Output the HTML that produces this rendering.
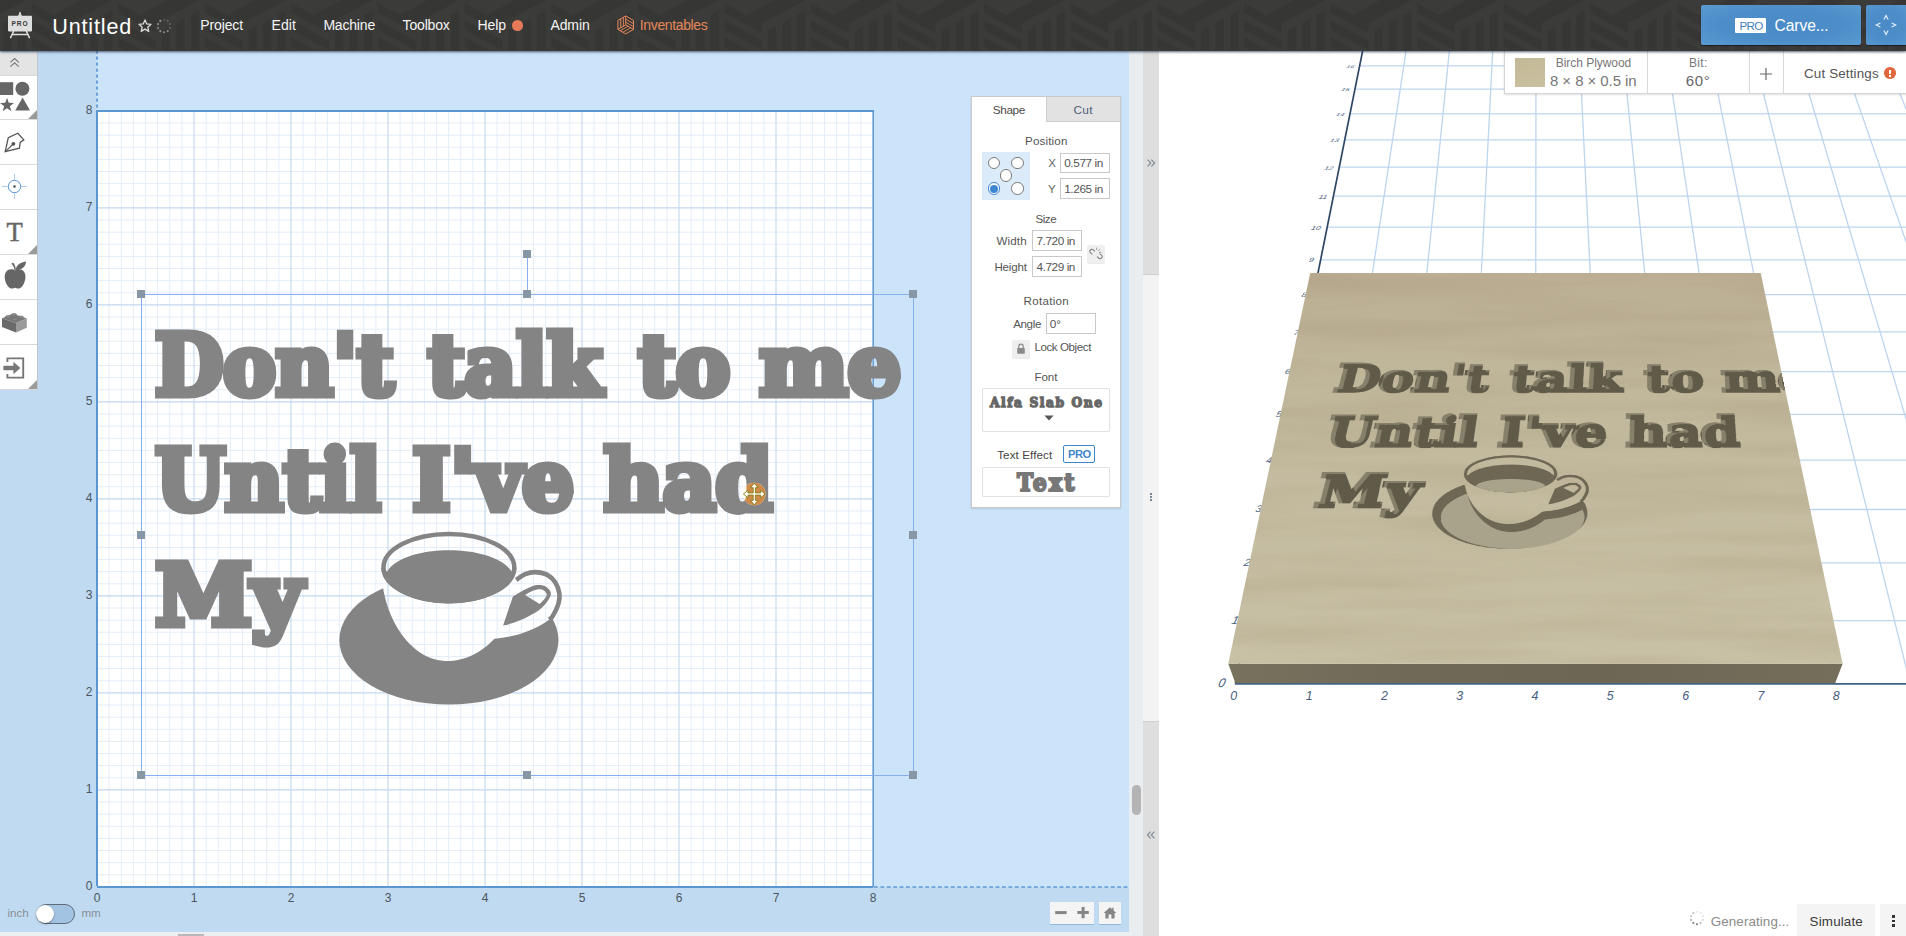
<!DOCTYPE html>
<html lang="en"><head><meta charset="utf-8"><title>Easel - Untitled</title>
<style>
*{box-sizing:border-box}
html,body{margin:0;padding:0}
body{width:1906px;height:936px;overflow:hidden;position:relative;background:#fff;
 font-family:"Liberation Sans",sans-serif;color:#4a4a4a;font-size:13px}
.abs{position:absolute}
svg{display:block;position:absolute;overflow:visible}
/* ---------- header ---------- */
#hdr{position:absolute;left:0;top:0;width:1906px;height:50.6px;background:#3a3b38;overflow:hidden;
 box-shadow:0 1px 2.5px rgba(40,55,80,.8);z-index:20}
#hdr .t{position:absolute;color:#f2f2f2;white-space:nowrap;line-height:1}
#hdr .menu{font-size:14.6px;top:18px;letter-spacing:-.15px}
#title{font-size:22.5px;top:14px;left:52px;color:#fff;letter-spacing:-.2px}
#carve{position:absolute;left:1701px;top:5px;width:160px;height:40px;background:radial-gradient(ellipse at center,#4a8bc7 0%,#4d8ec9 55%,#5b9ad2 100%);border-radius:2px;
 box-shadow:0 1px 1px rgba(0,0,0,.5)}
#carve2{position:absolute;left:1866px;top:5px;width:44px;height:40px;background:radial-gradient(ellipse at 45% 50%,#4a8bc7 0%,#4d8ec9 55%,#5b9ad2 100%);border-radius:2px;
 box-shadow:0 1px 1px rgba(0,0,0,.5)}
/* ---------- canvas ---------- */
#cv{position:absolute;left:0;top:50px;width:1129px;height:882px;background:#cce4fa;overflow:hidden}
#cvbot{position:absolute;left:0;top:930px;width:1143px;height:6px;background:#eceff1}
#vscroll{position:absolute;left:1129px;top:50px;width:14px;height:886px;background:#e9edf0}
#divider{position:absolute;left:1143px;top:50px;width:16px;height:886px;background:#dedede}
#p3d{position:absolute;left:1159px;top:50px;width:747px;height:886px;background:#fff;overflow:hidden}
.rl{position:absolute;font-size:12px;color:#4d5560;line-height:12px;white-space:nowrap}
/* ---------- toolbar ---------- */
#tb{position:absolute;left:0;top:52px;width:38px;height:338px;background:#fff;border-right:1px solid #c4c7ca}
.tbi{position:absolute;left:0;width:37px;border-bottom:1px solid #d9d9d9}
.corner{position:absolute;right:0;bottom:0;width:0;height:0;border-style:solid;border-width:0 0 9px 9px;border-color:transparent transparent #9a9a9a transparent}
/* ---------- properties ---------- */
#props{position:absolute;left:971px;top:97px;width:150px;height:411px;background:#fff;border:1px solid #c9c9c9;box-shadow:0 1px 2px rgba(0,0,0,.13);
 font-size:11.6px;color:#555}
#props .lb{position:absolute;white-space:nowrap;line-height:12px;letter-spacing:-.1px}
#props .in{position:absolute;border:1px solid #c8c8c8;background:#fff;height:20px;font-size:11.6px;line-height:18px;padding-left:3px;color:#555;white-space:nowrap;letter-spacing:-.2px}

</style></head>
<body>
<div id="hdr">
<svg width="1906" height="50" viewBox="0 0 1906 50" style="left:0;top:0"><defs><pattern id="hp" width="86.6" height="100" patternUnits="userSpaceOnUse" x="31.6" y="0"><polygon points="0,3.0 38,23.5 38,33.5 0,13.0" fill="#363735"/><polygon points="0,20.0 38,40.5 38,50.5 0,30.0" fill="#363735"/><polygon points="0,37.0 38,57.5 38,67.5 0,47.0" fill="#363735"/><polygon points="0,54.0 38,74.5 38,84.5 0,64.0" fill="#363735"/><polygon points="43.5,30.5 52.1,25.9 52.1,60 43.5,60" fill="#363735"/><polygon points="58.0,22.7 66.6,18.0 66.6,60 58.0,60" fill="#363735"/><polygon points="72.5,14.8 81.1,10.2 81.1,60 72.5,60" fill="#363735"/><polygon points="18.0,17.0 58.0,-4.6 74.0,4.0 34.0,25.6" fill="#363735"/><polygon points="44.0,3.0 84.0,-18.6 100.0,-10.0 60.0,11.6" fill="#363735"/></pattern></defs><rect width="1906" height="50" fill="#3b3c39"/><rect width="1906" height="50" fill="url(#hp)"/></svg>
<svg width="30" height="30" viewBox="0 0 30 30" style="left:5px;top:10px">
<path d="M13.6 5.8 L15 2.2 L16.4 5.8 Z" fill="#dcdcdc" stroke="#dcdcdc" stroke-width="1" stroke-linejoin="round"/>
<rect x="3" y="5.8" width="24" height="15.6" rx="0.8" fill="#dedede"/>
<path d="M8.6 21.4 L5.6 27.6 M21.4 21.4 L24.4 27.6 M7.2 24.6 H22.8" stroke="#dedede" stroke-width="1.5" fill="none" stroke-linecap="round"/>
<text x="15.1" y="16.4" text-anchor="middle" font-family="Liberation Sans, sans-serif" font-weight="bold" font-size="6.6" letter-spacing="1" fill="#3a3b38">PRO</text>
</svg>
<span style="position:absolute;white-space:nowrap;left:52.20px;top:16.00px;font-size:21.60px;line-height:21.60px;color:#ffffff;letter-spacing:0.845px;">Untitled</span>
<svg width="16" height="16" viewBox="0 0 16 16" style="left:136.5px;top:17.6px">
<path d="M8 1.9 L9.75 5.9 L14 6.3 L10.8 9.15 L11.75 13.4 L8 11.15 L4.25 13.4 L5.2 9.15 L2 6.3 L6.25 5.9 Z" fill="none" stroke="#d8d8d8" stroke-width="1.35" stroke-linejoin="round"/></svg>
<svg width="18" height="18" viewBox="0 0 18 18" style="left:155px;top:16.6px"><circle cx="9.00" cy="2.70" r="1.05" fill="#d8d2c8" opacity="0.18"/><circle cx="12.70" cy="3.90" r="1.05" fill="#d8d2c8" opacity="0.23"/><circle cx="14.99" cy="7.05" r="1.05" fill="#d8d2c8" opacity="0.28"/><circle cx="14.99" cy="10.95" r="1.05" fill="#d8d2c8" opacity="0.33"/><circle cx="12.70" cy="14.10" r="1.05" fill="#d8d2c8" opacity="0.55"/><circle cx="9.00" cy="15.30" r="1.05" fill="#d8d2c8" opacity="0.55"/><circle cx="5.30" cy="14.10" r="1.05" fill="#d8d2c8" opacity="0.55"/><circle cx="3.01" cy="10.95" r="1.05" fill="#d8d2c8" opacity="0.53"/><circle cx="3.01" cy="7.05" r="1.05" fill="#d8d2c8" opacity="0.58"/><circle cx="5.30" cy="3.90" r="1.05" fill="#d8d2c8" opacity="0.63"/></svg>
<span style="position:absolute;white-space:nowrap;left:200.30px;top:18.00px;font-size:14.00px;line-height:14.00px;color:#f4f4f4;letter-spacing:-0.139px;">Project</span>
<span style="position:absolute;white-space:nowrap;left:271.60px;top:18.00px;font-size:14.00px;line-height:14.00px;color:#f4f4f4;letter-spacing:0.019px;">Edit</span>
<span style="position:absolute;white-space:nowrap;left:323.40px;top:18.00px;font-size:14.00px;line-height:14.00px;color:#f4f4f4;letter-spacing:-0.188px;">Machine</span>
<span style="position:absolute;white-space:nowrap;left:402.60px;top:18.00px;font-size:14.00px;line-height:14.00px;color:#f4f4f4;letter-spacing:-0.179px;">Toolbox</span>
<span style="position:absolute;white-space:nowrap;left:477.60px;top:18.00px;font-size:14.00px;line-height:14.00px;color:#f4f4f4;letter-spacing:-0.148px;">Help</span>
<span style="position:absolute;white-space:nowrap;left:550.40px;top:18.00px;font-size:14.00px;line-height:14.00px;color:#f4f4f4;letter-spacing:-0.097px;">Admin</span>
<div class="abs" style="left:512.4px;top:20.4px;width:10.6px;height:10.6px;border-radius:50%;background:#e67a58"></div>
<svg width="20" height="20" viewBox="0 0 20 20" style="left:616.4px;top:15px" fill="none" stroke="#e5875a" stroke-width="1" stroke-linejoin="round"><polygon points="9.70,0.90 17.49,5.40 17.49,14.40 9.70,18.90 1.91,14.40 1.91,5.40"/><line x1="9.70" y1="9.90" x2="9.70" y2="0.90"/><line x1="9.70" y1="9.90" x2="17.49" y2="14.40"/><line x1="9.70" y1="9.90" x2="1.91" y2="14.40"/><line x1="4.71" y1="12.78" x2="4.71" y2="3.78" stroke-width=".9"/><line x1="7.36" y1="11.25" x2="7.36" y2="2.25" stroke-width=".9"/><line x1="9.70" y1="4.14" x2="17.49" y2="8.64" stroke-width=".9"/><line x1="9.70" y1="7.20" x2="17.49" y2="11.70" stroke-width=".9"/><line x1="14.69" y1="12.78" x2="6.89" y2="17.28" stroke-width=".9"/><line x1="12.04" y1="11.25" x2="4.24" y2="15.75" stroke-width=".9"/></svg>
<span style="position:absolute;white-space:nowrap;left:639.80px;top:18.00px;font-size:14.00px;line-height:14.00px;color:#e5875a;letter-spacing:-0.364px;">Inventables</span>
<div id="carve"><div class="abs" style="left:34px;top:13.4px;width:31px;height:14.4px;background:#fff;border-radius:1px"></div>
<span style="position:absolute;white-space:nowrap;left:38.40px;top:15.00px;font-size:11.60px;line-height:11.60px;color:#3f7fbd;letter-spacing:-0.646px;">PRO</span>
<span style="position:absolute;white-space:nowrap;left:73.60px;top:13.00px;font-size:15.60px;line-height:15.60px;color:#ffffff;letter-spacing:-0.077px;">Carve...</span>
</div>
<div id="carve2"><svg width="24" height="24" viewBox="0 0 24 24" style="left:8px;top:8px" fill="none" stroke="#e6eff8" stroke-width="1.15">
<path d="M9.9 6.6 L12 2.6 L14.1 6.6 M9.9 17.4 L12 21.4 L14.1 17.4 M6.4 9.9 L2.2 12 L6.4 14.1 M17.6 9.9 L21.8 12 L17.6 14.1"/></svg></div>
</div>
<div id="cv">
<div class="abs" style="left:0;top:0;width:96px;height:886px;background:#bfdaf1"></div>
<div class="abs" style="left:0;top:837px;width:1129px;height:60px;background:#bfdaf1"></div>
<svg width="1129" height="886" viewBox="0 50 1129 886" style="left:0;top:0"><rect x="97" y="110" width="776" height="776" fill="#ffffff"/><path d="M109.12 111V887M97 874.77H873M121.25 111V887M97 862.65H873M133.38 111V887M97 850.52H873M145.50 111V887M97 838.40H873M157.62 111V887M97 826.27H873M169.75 111V887M97 814.15H873M181.88 111V887M97 802.02H873M206.12 111V887M97 777.77H873M218.25 111V887M97 765.65H873M230.38 111V887M97 753.52H873M242.50 111V887M97 741.40H873M254.62 111V887M97 729.27H873M266.75 111V887M97 717.15H873M278.88 111V887M97 705.02H873M303.12 111V887M97 680.77H873M315.25 111V887M97 668.65H873M327.38 111V887M97 656.52H873M339.50 111V887M97 644.40H873M351.62 111V887M97 632.27H873M363.75 111V887M97 620.15H873M375.88 111V887M97 608.02H873M400.12 111V887M97 583.77H873M412.25 111V887M97 571.65H873M424.38 111V887M97 559.52H873M436.50 111V887M97 547.40H873M448.62 111V887M97 535.27H873M460.75 111V887M97 523.15H873M472.88 111V887M97 511.02H873M497.12 111V887M97 486.77H873M509.25 111V887M97 474.65H873M521.38 111V887M97 462.52H873M533.50 111V887M97 450.40H873M545.62 111V887M97 438.27H873M557.75 111V887M97 426.15H873M569.88 111V887M97 414.02H873M594.12 111V887M97 389.77H873M606.25 111V887M97 377.65H873M618.38 111V887M97 365.52H873M630.50 111V887M97 353.40H873M642.62 111V887M97 341.27H873M654.75 111V887M97 329.15H873M666.88 111V887M97 317.02H873M691.12 111V887M97 292.77H873M703.25 111V887M97 280.65H873M715.38 111V887M97 268.52H873M727.50 111V887M97 256.40H873M739.62 111V887M97 244.27H873M751.75 111V887M97 232.15H873M763.88 111V887M97 220.02H873M788.12 111V887M97 195.77H873M800.25 111V887M97 183.65H873M812.38 111V887M97 171.52H873M824.50 111V887M97 159.40H873M836.62 111V887M97 147.27H873M848.75 111V887M97 135.15H873M860.88 111V887M97 123.02H873" stroke="#e4edf8" stroke-width="1" fill="none"/><path d="M97.00 111V887M97 886.90H873M194.00 111V887M97 789.90H873M291.00 111V887M97 692.90H873M388.00 111V887M97 595.90H873M485.00 111V887M97 498.90H873M582.00 111V887M97 401.90H873M679.00 111V887M97 304.90H873M776.00 111V887M97 207.90H873M873.00 111V887M97 110.90H873" stroke="#c4d8ef" stroke-width="1.1" fill="none"/><path d="M97 886V110M96 111H874" stroke="#5a97d2" stroke-width="2" fill="none"/><path d="M873.2 110V887" stroke="#5a97d2" stroke-width="1.4" fill="none"/><path d="M97 887H873" stroke="#5a97d2" stroke-width="2" fill="none"/><path d="M97 50.6V110" stroke="#6ba2d8" stroke-width="2" stroke-dasharray="3.2 2.8" fill="none"/><path d="M874 887H1129" stroke="#5f9bd6" stroke-width="1.4" stroke-dasharray="3.8 2.6" fill="none"/></svg>
<span class="rl" style="right:1036.6px;top:829.7px">0</span>
<span class="rl" style="left:87.0px;top:841.7px;width:20px;text-align:center">0</span>
<span class="rl" style="right:1036.6px;top:732.7px">1</span>
<span class="rl" style="left:184.0px;top:841.7px;width:20px;text-align:center">1</span>
<span class="rl" style="right:1036.6px;top:635.7px">2</span>
<span class="rl" style="left:281.0px;top:841.7px;width:20px;text-align:center">2</span>
<span class="rl" style="right:1036.6px;top:538.7px">3</span>
<span class="rl" style="left:378.0px;top:841.7px;width:20px;text-align:center">3</span>
<span class="rl" style="right:1036.6px;top:441.7px">4</span>
<span class="rl" style="left:475.0px;top:841.7px;width:20px;text-align:center">4</span>
<span class="rl" style="right:1036.6px;top:344.7px">5</span>
<span class="rl" style="left:572.0px;top:841.7px;width:20px;text-align:center">5</span>
<span class="rl" style="right:1036.6px;top:247.7px">6</span>
<span class="rl" style="left:669.0px;top:841.7px;width:20px;text-align:center">6</span>
<span class="rl" style="right:1036.6px;top:150.7px">7</span>
<span class="rl" style="left:766.0px;top:841.7px;width:20px;text-align:center">7</span>
<span class="rl" style="right:1036.6px;top:53.7px">8</span>
<span class="rl" style="left:863.0px;top:841.7px;width:20px;text-align:center">8</span>
<svg width="1129" height="886" viewBox="0 50 1129 886" style="left:0;top:0"><text x="155.0" y="394.9" textLength="238.5" lengthAdjust="spacingAndGlyphs" font-family="'DejaVu Serif Condensed','DejaVu Serif','Liberation Serif',serif" font-weight="bold" font-size="83.7" fill="#848484" stroke="#848484" stroke-width="7.0" stroke-linejoin="miter" >Don&#39;t</text><text x="428.0" y="394.9" textLength="174.2" lengthAdjust="spacingAndGlyphs" font-family="'DejaVu Serif Condensed','DejaVu Serif','Liberation Serif',serif" font-weight="bold" font-size="83.7" fill="#848484" stroke="#848484" stroke-width="7.0" stroke-linejoin="miter" >talk</text><text x="638.5" y="394.9" textLength="91.4" lengthAdjust="spacingAndGlyphs" font-family="'DejaVu Serif Condensed','DejaVu Serif','Liberation Serif',serif" font-weight="bold" font-size="83.7" fill="#848484" stroke="#848484" stroke-width="7.0" stroke-linejoin="miter" >to</text><text x="759.5" y="394.9" textLength="141.4" lengthAdjust="spacingAndGlyphs" font-family="'DejaVu Serif Condensed','DejaVu Serif','Liberation Serif',serif" font-weight="bold" font-size="83.7" fill="#848484" stroke="#848484" stroke-width="7.0" stroke-linejoin="miter" >me</text><text x="155.5" y="509.9" textLength="225.2" lengthAdjust="spacingAndGlyphs" font-family="'DejaVu Serif Condensed','DejaVu Serif','Liberation Serif',serif" font-weight="bold" font-size="83.7" fill="#848484" stroke="#848484" stroke-width="7.0" stroke-linejoin="miter" >Until</text><text x="412.5" y="509.9" textLength="161.1" lengthAdjust="spacingAndGlyphs" font-family="'DejaVu Serif Condensed','DejaVu Serif','Liberation Serif',serif" font-weight="bold" font-size="83.7" fill="#848484" stroke="#848484" stroke-width="7.0" stroke-linejoin="miter" >I&#39;ve</text><text x="604.0" y="509.9" textLength="168.2" lengthAdjust="spacingAndGlyphs" font-family="'DejaVu Serif Condensed','DejaVu Serif','Liberation Serif',serif" font-weight="bold" font-size="83.7" fill="#848484" stroke="#848484" stroke-width="7.0" stroke-linejoin="miter" >had</text><text x="155.5" y="625.2" textLength="146.9" lengthAdjust="spacingAndGlyphs" font-family="'DejaVu Serif Condensed','DejaVu Serif','Liberation Serif',serif" font-weight="bold" font-size="83.7" fill="#848484" stroke="#848484" stroke-width="7.0" stroke-linejoin="miter" >My</text><mask id="ma" maskUnits="userSpaceOnUse" x="330" y="520" width="250" height="200"><rect x="330" y="520" width="250" height="200" fill="#fff"/><path d="M381 540L381 562L383.3 589.3C388 615 400 638 419.2 652.1C429 659 440 661.3 449.2 661.1C460 661 475 656 488 645L494.4 638.7C506 637.5 515 636 521.3 633.6C530 630.5 537 627.5 541.8 624.6C547 621.5 551 618.5 553.3 615.6L580 600L580 540Z" fill="#000"/><ellipse cx="448.9" cy="567.6" rx="67.6" ry="35.8" fill="#000"/></mask><ellipse cx="448.9" cy="640" rx="109.6" ry="64.6" fill="#848484" mask="url(#ma)"/><ellipse cx="448.9" cy="567.6" rx="65.4" ry="33.6" fill="none" stroke="#848484" stroke-width="4.5"/><path d="M387 571.5C405 543.2 493.5 543.2 511.6 571.5L516.5 567.6A67.6 35.8 0 0 1 381.3 567.6Z" fill="#848484"/><path d="M516.2 579.9C517.7 579.0 521.9 575.5 525.1 574.2C528.3 572.9 531.8 572.0 535.4 572.1C539.0 572.2 543.6 572.9 546.9 574.6C550.2 576.3 553.1 579.1 555.2 582.3C557.3 585.5 558.9 590.2 559.4 593.8C559.9 597.4 559.4 600.5 558.3 604.1C557.2 607.7 554.5 613.0 553.0 615.6C551.5 618.2 550.1 618.9 549.5 619.6" fill="none" stroke="#848484" stroke-width="4.6"/><path d="M503.1 625.6L512.9 596.4C514.9 595.2 521.1 591.3 525.1 589.4C529.1 587.5 533.3 585.6 536.7 585.1C540.1 584.6 543.2 585.1 545.6 586.4C548.0 587.6 550.4 590.3 550.8 592.6C551.2 594.9 550.1 597.4 548.2 600.3C546.3 603.2 543.3 606.8 539.2 609.9C535.1 613.0 526.4 617.3 523.8 618.8Q512 624 503.1 625.6Z M525.1 594.9C526.6 594.1 531.3 591.2 534.1 590.3C536.9 589.4 539.7 588.8 541.8 589.4C543.9 590.0 546.2 592.3 546.7 593.8C547.2 595.3 546.2 596.6 545.0 598.3C543.8 600.0 540.5 603.1 539.6 604.1Z" fill="#848484" fill-rule="evenodd"/><g shape-rendering="crispEdges"><path d="M141.5 294.5H913.5V775.5H141.5ZM527.5 254V294" fill="none" stroke="#86aff0" stroke-width="1"/><rect x="137" y="290" width="8" height="8" fill="#8797a6"/><rect x="523" y="290" width="8" height="8" fill="#8797a6"/><rect x="909" y="290" width="8" height="8" fill="#8797a6"/><rect x="137" y="531" width="8" height="8" fill="#8797a6"/><rect x="909" y="531" width="8" height="8" fill="#8797a6"/><rect x="137" y="771" width="8" height="8" fill="#8797a6"/><rect x="523" y="771" width="8" height="8" fill="#8797a6"/><rect x="909" y="771" width="8" height="8" fill="#8797a6"/><rect x="523" y="250" width="8" height="8" fill="#8797a6"/></g><mask id="mhad" maskUnits="userSpaceOnUse" x="590" y="420" width="200" height="110"><text x="604.0" y="509.9" textLength="168.2" lengthAdjust="spacingAndGlyphs" font-family="'DejaVu Serif Condensed','DejaVu Serif','Liberation Serif',serif" font-weight="bold" font-size="83.7" fill="#fff" stroke="#fff" stroke-width="7" stroke-linejoin="miter">had</text></mask><circle cx="754.3" cy="494" r="11.2" fill="#fcfae6"/><circle cx="754.3" cy="494" r="11.2" fill="#cf8a47" mask="url(#mhad)"/><g transform="translate(754.3,494)"><path d="M0 -10.8L3.8 -6.3H1.1V-1.1H6.3V-3.8L10.8 0L6.3 3.8V1.1H1.1V6.3H3.8L0 10.8L-3.8 6.3H-1.1V1.1H-6.3V3.8L-10.8 0L-6.3 -3.8V-1.1H-1.1V-6.3H-3.8Z" fill="#fffff4" stroke="#857a1c" stroke-width=".9" stroke-linejoin="miter"/></g></svg>
<span style="position:absolute;white-space:nowrap;left:7.40px;top:857.00px;font-size:11.60px;line-height:11.60px;color:#8b9198;letter-spacing:0.030px;">inch</span>
<div class="abs" style="left:35.6px;top:854.4px;width:39.4px;height:19.4px;border-radius:10px;background:#a3c3e2;border:1px solid #5f6b78"></div>
<div class="abs" style="left:36.2px;top:855.0px;width:18px;height:18px;border-radius:50%;background:#fff;box-shadow:0 1px 2px rgba(0,0,0,.35)"></div>
<span style="position:absolute;white-space:nowrap;left:81.40px;top:857.00px;font-size:11.60px;line-height:11.60px;color:#8b9198;letter-spacing:0.037px;">mm</span>
<div class="abs" style="left:1050px;top:852px;width:44px;height:22px;background:#f4f4f4;box-shadow:0 1px 0 rgba(80,130,190,.4)"></div>
<div class="abs" style="left:1099px;top:852px;width:22px;height:22px;background:#f4f4f4;box-shadow:0 1px 0 rgba(80,130,190,.4)"></div>
<svg width="72" height="22" viewBox="0 0 72 22" style="left:1050px;top:852px"><path d="M5.2 10.6H16.6" stroke="#858585" stroke-width="3"/><path d="M27.4 10.6H38.8M33.1 5V16.2" stroke="#858585" stroke-width="3"/><path d="M60 5.2 L53.6 11 H55.4 V16.6 H58.6 V12.6 H61.4 V16.6 H64.6 V11 H66.4 L63.6 8.4 V5.8 H62.2 V7.2 Z" fill="#858585"/></svg>
</div>
<div id="cvbot" style="top:932px;height:4px"></div><div class="abs" style="left:178px;top:934px;width:26px;height:2px;background:#b9b9b9"></div>
<div id="vscroll"></div><div class="abs" style="left:1132px;top:785px;width:9px;height:30px;border-radius:5px;background:#b4b4b4"></div>
<div id="divider"></div>
<div class="abs" style="left:1143px;top:274px;width:16px;height:448px;background:#f3f3f3;border-top:1px solid #d0d0d0;border-bottom:1px solid #d0d0d0"></div>
<svg width="16" height="16" viewBox="0 0 16 16" style="left:1143px;top:155px" fill="none" stroke="#7b8794" stroke-width="1.1"><path d="M4.6 4.6 L7.8 8 L4.6 11.4 M8.4 4.6 L11.6 8 L8.4 11.4"/></svg>
<svg width="16" height="16" viewBox="0 0 16 16" style="left:1143px;top:827px" fill="none" stroke="#7b8794" stroke-width="1.1"><path d="M7.6 4.6 L4.4 8 L7.6 11.4 M11.4 4.6 L8.2 8 L11.4 11.4"/></svg>
<svg width="16" height="16" viewBox="0 0 16 16" style="left:1143px;top:489px" fill="#7b8794"><rect x="7" y="4" width="2" height="2"/><rect x="7" y="7" width="2" height="2"/><rect x="7" y="10" width="2" height="2"/></svg>
<div id="tb">
<div class="tbi" style="top:0.0px;height:24.0px;background:#e4e4e4"></div>
<div class="tbi" style="top:24.0px;height:44.0px;background:#fff"><div class="corner"></div></div>
<div class="tbi" style="top:68.0px;height:45.0px;background:#fff"></div>
<div class="tbi" style="top:113.0px;height:45.0px;background:#fff"></div>
<div class="tbi" style="top:158.0px;height:45.0px;background:#fff"><div class="corner"></div></div>
<div class="tbi" style="top:203.0px;height:45.0px;background:#fff"></div>
<div class="tbi" style="top:248.0px;height:45.0px;background:#fff"></div>
<div class="tbi" style="top:293.0px;height:45.0px;background:#fff"><div class="corner"></div></div>
<svg width="37" height="338" viewBox="0 52 37 338" style="left:0;top:0"><path d="M10.4 62.4L14.6 58.6L18.8 62.4M10.4 66.6L14.6 62.8L18.8 66.6" fill="none" stroke="#777" stroke-width="1.1"/><rect x="0" y="82.2" width="13.2" height="12.8" fill="#666666"/><circle cx="22.4" cy="88.8" r="7" fill="#666666"/><polygon points="7.00,97.80 8.76,102.77 14.04,102.91 9.85,106.13 11.35,111.19 7.00,108.20 2.65,111.19 4.15,106.13 -0.04,102.91 5.24,102.77" fill="#666666"/><polygon points="22.6,97.6 30,110.6 15.2,110.6" fill="#666666"/><g transform="translate(14.6,142.6)"><path d="M-9.4 9.1L-6.3 -4.9L3.2 -9.4L9.2 -2.8L5.6 -0.2L4.8 5.6Z" fill="none" stroke="#555" stroke-width="1.3" stroke-linejoin="miter"/><path d="M-9.2 9L-1.4 1.4" stroke="#555" stroke-width="1.1"/><circle cx="-1.2" cy="1.2" r="1.9" fill="#555"/></g><g transform="translate(14.5,186.5)"><circle r="6.2" fill="none" stroke="#5b94d6" stroke-width="1"/><path d="M-12.4 0H-6.6M6.6 0H12.4M0 -12.4V-6.6M0 6.6V12.4" stroke="#a9c9ee" stroke-width="1"/><rect x="-1.1" y="-1.1" width="2.2" height="2.2" fill="#444"/></g><text x="14.6" y="241.2" text-anchor="middle" font-family="Liberation Serif, serif" font-size="26.6" fill="#666" stroke="#666" stroke-width=".5">T</text><g transform="translate(15.2,276)" fill="#666666"><path d="M0 -5.4C-2.4 -7.2 -6.6 -7.2 -9 -4.2C-11.4 -1 -10.8 4.6 -8 9.2C-6 12.6 -3 13.4 -0.2 11.8C2.6 13.4 5.8 12.6 7.8 9.2C10.6 4.6 11.2 -1 8.8 -4.2C6.4 -7.2 2.4 -7.2 0 -5.4Z"/><path d="M0.6 -6C0.8 -10.4 4 -13.6 10.8 -14.6C10.6 -9.6 6.6 -6 0.6 -6Z"/><path d="M-0.6 -5.6C-1 -8.6 -2 -10.6 -3.8 -12.2L-2.2 -13.4C-0.4 -11.4 0.6 -8.8 0.8 -5.6Z"/></g><g transform="translate(14.4,322.6)"><path d="M-12.4 -4.4L-1.4 -8.8L12.4 -4L1.6 0.6Z" fill="#7a7a7a"/><path d="M-12.4 -4.4L1.6 0.6V10L-12.4 4.4Z" fill="#6a6a6a"/><path d="M1.6 0.6L12.4 -4V5.2L1.6 10Z" fill="#9a9a9a"/><ellipse cx="-6.2" cy="-5.8" rx="2.7" ry="1.3" fill="#8c8c8c" stroke="#666" stroke-width=".5"/><ellipse cx="-0.4" cy="-7.8" rx="2.7" ry="1.3" fill="#8c8c8c" stroke="#666" stroke-width=".5"/><ellipse cx="0.8" cy="-3.4" rx="2.7" ry="1.3" fill="#8c8c8c" stroke="#666" stroke-width=".5"/><ellipse cx="6.4" cy="-5.4" rx="2.7" ry="1.3" fill="#8c8c8c" stroke="#666" stroke-width=".5"/></g><g transform="translate(0,0)"><path d="M7.4 362V358.4H23.2V377.6H7.4V374" fill="none" stroke="#777" stroke-width="1.9"/><path d="M3.4 365.8H13.4V361.8L20.4 368L13.4 374.2V370.2H3.4Z" fill="#777"/></g></svg>
</div>
<div id="props" style="left:971px;top:96px;width:150px;height:412px">
<div class="abs" style="left:74.4px;top:0.0px;width:73.6px;height:24.6px;background:#e2e2e2;border-left:1px solid #cfcfcf;border-bottom:1px solid #cfcfcf"></div>
<span style="position:absolute;white-space:nowrap;left:20.80px;top:8.00px;font-size:11.80px;line-height:11.80px;color:#4c4c4c;letter-spacing:-0.424px;">Shape</span>
<span style="position:absolute;white-space:nowrap;left:101.40px;top:8.00px;font-size:11.80px;line-height:11.80px;color:#4e5f78;letter-spacing:0.412px;">Cut</span>
<span style="position:absolute;white-space:nowrap;left:53.00px;top:38.00px;font-size:11.60px;line-height:11.60px;color:#555;letter-spacing:0.166px;">Position</span>
<div class="abs" style="left:10.0px;top:55.0px;width:48.0px;height:47.8px;background:#dcebfa"></div>
<div class="abs" style="left:16.1px;top:60.1px;width:12.4px;height:12.4px;border-radius:50%;background:#fff;border:1px solid #7a7a7a"></div>
<div class="abs" style="left:39.4px;top:60.1px;width:12.4px;height:12.4px;border-radius:50%;background:#fff;border:1px solid #7a7a7a"></div>
<div class="abs" style="left:28.0px;top:72.4px;width:12.4px;height:12.4px;border-radius:50%;background:#fff;border:1px solid #7a7a7a"></div>
<div class="abs" style="left:16.1px;top:85.4px;width:12.4px;height:12.4px;border-radius:50%;background:#fff;border:1px solid #3f86d0"></div>
<div class="abs" style="left:18.3px;top:87.6px;width:8.0px;height:8.0px;border-radius:50%;background:#3f86d0"></div>
<div class="abs" style="left:39.4px;top:85.4px;width:12.4px;height:12.4px;border-radius:50%;background:#fff;border:1px solid #7a7a7a"></div>
<span style="position:absolute;white-space:nowrap;left:76.20px;top:60.00px;font-size:11.60px;line-height:11.60px;color:#666;">X</span>
<div class="abs" style="left:88.0px;top:55.6px;width:50.0px;height:20.2px;border:1px solid #c9c9c9;background:#fff"></div>
<span style="position:absolute;white-space:nowrap;left:92.20px;top:61.00px;font-size:11.80px;line-height:11.80px;color:#555;letter-spacing:-0.399px;">0.577 in</span>
<span style="position:absolute;white-space:nowrap;left:76.00px;top:86.00px;font-size:11.60px;line-height:11.60px;color:#666;">Y</span>
<div class="abs" style="left:88.0px;top:81.4px;width:50.0px;height:20.2px;border:1px solid #c9c9c9;background:#fff"></div>
<span style="position:absolute;white-space:nowrap;left:92.20px;top:87.00px;font-size:11.80px;line-height:11.80px;color:#555;letter-spacing:-0.399px;">1.265 in</span>
<span style="position:absolute;white-space:nowrap;left:63.40px;top:116.00px;font-size:11.60px;line-height:11.60px;color:#555;letter-spacing:-0.441px;">Size</span>
<span style="position:absolute;white-space:nowrap;left:24.40px;top:138.00px;font-size:11.60px;line-height:11.60px;color:#555;letter-spacing:0.150px;">Width</span>
<div class="abs" style="left:60.2px;top:133.4px;width:49.8px;height:20.6px;border:1px solid #c9c9c9;background:#fff"></div>
<span style="position:absolute;white-space:nowrap;left:64.40px;top:139.00px;font-size:11.80px;line-height:11.80px;color:#555;letter-spacing:-0.424px;">7.720 in</span>
<span style="position:absolute;white-space:nowrap;left:22.40px;top:164.00px;font-size:11.60px;line-height:11.60px;color:#555;letter-spacing:-0.189px;">Height</span>
<div class="abs" style="left:60.2px;top:159.4px;width:49.8px;height:20.6px;border:1px solid #c9c9c9;background:#fff"></div>
<span style="position:absolute;white-space:nowrap;left:64.40px;top:165.00px;font-size:11.80px;line-height:11.80px;color:#555;letter-spacing:-0.424px;">4.729 in</span>
<div class="abs" style="left:115.0px;top:147.6px;width:17.8px;height:18.0px;background:#efefef;border-radius:2px;box-shadow:0 1px 0 rgba(0,0,0,.08)"></div>
<svg width="18" height="18" viewBox="0 0 18 18" style="left:115.0px;top:147.6px" fill="none" stroke="#8a8a8a" stroke-width="1.2" stroke-linecap="round"><path d="M7.6 6.2L6.4 5C5.4 4 4 4.2 3.4 5C2.6 5.8 2.8 7 3.6 7.8L5 9.2"/><path d="M10.4 11.8L11.6 13C12.6 14 14 13.8 14.6 13C15.4 12.2 15.2 11 14.4 10.2L13 8.8"/><path d="M9.6 4.6V3M11.4 5.6L12.6 4.4M12.4 7.4H14" stroke-width=".8"/></svg>
<span style="position:absolute;white-space:nowrap;left:51.60px;top:198.00px;font-size:11.60px;line-height:11.60px;color:#555;letter-spacing:0.274px;">Rotation</span>
<span style="position:absolute;white-space:nowrap;left:41.20px;top:221.00px;font-size:11.60px;line-height:11.60px;color:#555;letter-spacing:-0.374px;">Angle</span>
<div class="abs" style="left:74.2px;top:216.4px;width:49.8px;height:20.4px;border:1px solid #c9c9c9;background:#fff"></div>
<span style="position:absolute;white-space:nowrap;left:77.80px;top:222.00px;font-size:11.80px;line-height:11.80px;color:#555;">0°</span>
<div class="abs" style="left:40.0px;top:243.4px;width:17.8px;height:17.8px;background:#efefef;border-radius:2px;box-shadow:0 1px 0 rgba(0,0,0,.08)"></div>
<svg width="18" height="18" viewBox="0 0 18 18" style="left:40.0px;top:243.4px"><rect x="5.2" y="8" width="7.6" height="5.8" rx=".8" fill="#8a8a8a"/><path d="M6.8 8V6.4A2.2 2.2 0 0 1 11.2 6.4V8" fill="none" stroke="#8a8a8a" stroke-width="1.2"/></svg>
<span style="position:absolute;white-space:nowrap;left:62.40px;top:244.00px;font-size:11.60px;line-height:11.60px;color:#555;letter-spacing:-0.423px;">Lock Object</span>
<span style="position:absolute;white-space:nowrap;left:62.40px;top:274.00px;font-size:11.60px;line-height:11.60px;color:#555;letter-spacing:-0.053px;">Font</span>
<div class="abs" style="left:10.4px;top:290.8px;width:127.4px;height:44.2px;border:1px solid #e2e2e2;border-radius:1px"></div>
<span style="position:absolute;white-space:nowrap;left:17.90px;top:299.00px;font-size:13.60px;line-height:13.60px;font-family:'DejaVu Serif Condensed','DejaVu Serif','Liberation Serif',serif;font-weight:bold;color:#666;letter-spacing:1.588px;-webkit-text-stroke:1.3px #666;">Alfa Slab One</span>
<svg width="10" height="6" viewBox="0 0 10 6" style="left:72.2px;top:317.8px"><path d="M0.4 0.4H9.6L5 5.4Z" fill="#555"/></svg>
<span style="position:absolute;white-space:nowrap;left:25.20px;top:352.00px;font-size:11.60px;line-height:11.60px;color:#444;letter-spacing:0.114px;">Text Effect</span>
<div class="abs" style="left:91.0px;top:347.6px;width:32.0px;height:18.2px;border:1px solid #3f86c9;border-radius:2px"></div>
<span style="position:absolute;white-space:nowrap;left:96.00px;top:352.00px;font-size:11.20px;line-height:11.20px;font-weight:bold;color:#3f86c9;letter-spacing:-0.557px;">PRO</span>
<div class="abs" style="left:10.4px;top:370.2px;width:127.4px;height:29.6px;border:1px solid #e2e2e2;border-radius:1px"></div>
<span style="position:absolute;white-space:nowrap;left:45.20px;top:375.00px;font-size:23.60px;line-height:23.60px;font-family:'DejaVu Serif Condensed','DejaVu Serif','Liberation Serif',serif;font-weight:bold;color:#777;letter-spacing:2.686px;-webkit-text-stroke:2.2px #777;">Text</span>
</div>
<div id="p3d"><div class="abs" style="left:-1159px;top:-50px;width:1906px;height:936px">
<svg width="1906" height="936" viewBox="0 0 1906 936" style="left:0;top:0"><path d="M1310.4 683.5L1474.6 -402.8M1385.3 683.5L1495.3 -402.8M1460.3 683.5L1516.0 -402.8M1535.2 683.5L1536.6 -402.8M1610.2 683.5L1557.3 -402.8M1685.2 683.5L1578.0 -402.8M1760.1 683.5L1598.7 -402.8M1835.1 683.5L1619.4 -402.8M1910.1 683.5L1640.1 -402.8M1985.0 683.5L1660.8 -402.8M2060.0 683.5L1681.5 -402.8M2134.9 683.5L1702.2 -402.8M2209.9 683.5L1722.9 -402.8M2284.9 683.5L1743.5 -402.8M2359.8 683.5L1764.2 -402.8M2434.8 683.5L1784.9 -402.8M2509.8 683.5L1805.6 -402.8M2584.7 683.5L1826.3 -402.8M2659.7 683.5L1847.0 -402.8M2734.6 683.5L1867.7 -402.8M2809.6 683.5L1888.4 -402.8M2884.6 683.5L1909.1 -402.8M2959.5 683.5L1929.7 -402.8M3034.5 683.5L1950.4 -402.8M3109.5 683.5L1971.1 -402.8M3184.4 683.5L1991.8 -402.8M3259.4 683.5L2012.5 -402.8M3334.3 683.5L2033.2 -402.8M3409.3 683.5L2053.9 -402.8M3484.3 683.5L2074.6 -402.8M3559.2 683.5L2095.3 -402.8M3634.2 683.5L2116.0 -402.8M3709.2 683.5L2136.6 -402.8M3784.1 683.5L2157.3 -402.8M3859.1 683.5L2178.0 -402.8M3934.0 683.5L2198.7 -402.8M4009.0 683.5L2219.4 -402.8M4084.0 683.5L2240.1 -402.8M4158.9 683.5L2260.8 -402.8M1248.0 620.6L4120.9 620.6M1259.7 562.9L4017.1 562.9M1270.4 509.5L3921.2 509.5M1280.3 460.2L3832.5 460.2M1289.5 414.3L3750.1 414.3M1298.1 371.7L3673.5 371.7M1306.1 331.9L3602.0 331.9M1313.6 294.7L3535.1 294.7M1320.6 259.8L3472.4 259.8M1327.2 227.1L3413.5 227.1M1333.4 196.2L3358.1 196.2M1339.2 167.2L3305.9 167.2M1344.8 139.8L3256.6 139.8M1350.0 113.8L3210.0 113.8M1354.9 89.2L3165.8 89.2M1359.6 65.9L3123.9 65.9M1364.1 43.8L3084.1 43.8M1368.3 22.7L3046.3 22.7M1372.3 2.7L3010.2 2.7M1376.2 -16.4L2975.9 -16.4M1379.8 -34.7L2943.1 -34.7M1383.4 -52.1L2911.8 -52.1M1386.7 -68.8L2881.8 -68.8M1389.9 -84.7L2853.1 -84.7M1393.0 -100.0L2825.6 -100.0M1395.9 -114.7L2799.3 -114.7M1398.8 -128.8L2774.0 -128.8M1401.5 -142.3L2749.6 -142.3M1404.1 -155.3L2726.3 -155.3M1406.6 -167.8L2703.8 -167.8M1409.1 -179.9L2682.1 -179.9M1411.4 -191.5L2661.3 -191.5M1413.6 -202.7L2641.1 -202.7M1415.8 -213.5L2621.7 -213.5M1417.9 -223.9L2603.0 -223.9M1419.9 -234.0L2584.9 -234.0M1421.9 -243.7L2567.4 -243.7M1423.8 -253.1L2550.5 -253.1M1425.6 -262.2L2534.1 -262.2M1427.4 -271.1L2518.2 -271.1M1429.1 -279.6L2502.9 -279.6M1430.8 -287.9L2488.0 -287.9M1432.4 -295.9L2473.5 -295.9M1434.0 -303.7L2459.5 -303.7M1435.5 -311.3L2446.0 -311.3M1437.0 -318.6L2432.8 -318.6M1438.4 -325.8L2419.9 -325.8M1439.8 -332.7L2407.5 -332.7M1441.1 -339.4L2395.4 -339.4M1442.5 -346.0L2383.6 -346.0M1443.7 -352.3L2372.1 -352.3M1445.0 -358.6L2361.0 -358.6M1446.2 -364.6L2350.1 -364.6M1447.4 -370.5L2339.6 -370.5M1448.5 -376.2L2329.3 -376.2M1449.7 -381.8L2319.2 -381.8M1450.8 -387.2L2309.4 -387.2M1451.8 -392.6L2299.9 -392.6M1452.9 -397.7L2290.6 -397.7" stroke="#bdd5ee" stroke-width="1.3" fill="none"/><path d="M1235.4 683.5L1453.9 -402.8" stroke="#2f4766" stroke-width="1.7" fill="none"/><path d="M1234.9 683.9L1906.0 683.9" stroke="#3d5f88" stroke-width="1.6" fill="none"/><text x="1233.8" y="700.2" text-anchor="middle" font-family="Liberation Sans, sans-serif" font-style="italic" font-size="12.4" fill="#46607f">0</text><text x="1309.1" y="700.2" text-anchor="middle" font-family="Liberation Sans, sans-serif" font-style="italic" font-size="12.4" fill="#46607f">1</text><text x="1384.4" y="700.2" text-anchor="middle" font-family="Liberation Sans, sans-serif" font-style="italic" font-size="12.4" fill="#46607f">2</text><text x="1459.7" y="700.2" text-anchor="middle" font-family="Liberation Sans, sans-serif" font-style="italic" font-size="12.4" fill="#46607f">3</text><text x="1535.0" y="700.2" text-anchor="middle" font-family="Liberation Sans, sans-serif" font-style="italic" font-size="12.4" fill="#46607f">4</text><text x="1610.3" y="700.2" text-anchor="middle" font-family="Liberation Sans, sans-serif" font-style="italic" font-size="12.4" fill="#46607f">5</text><text x="1685.6" y="700.2" text-anchor="middle" font-family="Liberation Sans, sans-serif" font-style="italic" font-size="12.4" fill="#46607f">6</text><text x="1760.9" y="700.2" text-anchor="middle" font-family="Liberation Sans, sans-serif" font-style="italic" font-size="12.4" fill="#46607f">7</text><text x="1836.2" y="700.2" text-anchor="middle" font-family="Liberation Sans, sans-serif" font-style="italic" font-size="12.4" fill="#46607f">8</text><text transform="translate(1224.5 686.7) scale(1 1.000) skewX(-14)" text-anchor="end" font-family="Liberation Sans, sans-serif" font-style="italic" font-size="12.4" fill="#46607f">0</text><text transform="translate(1237.6 623.7) scale(1 0.954) skewX(-14)" text-anchor="end" font-family="Liberation Sans, sans-serif" font-style="italic" font-size="11.9" fill="#46607f">1</text><text transform="translate(1249.7 565.8) scale(1 0.912) skewX(-14)" text-anchor="end" font-family="Liberation Sans, sans-serif" font-style="italic" font-size="11.4" fill="#46607f">2</text><text transform="translate(1260.9 512.4) scale(1 0.873) skewX(-14)" text-anchor="end" font-family="Liberation Sans, sans-serif" font-style="italic" font-size="11.0" fill="#46607f">3</text><text transform="translate(1271.3 463.0) scale(1 0.838) skewX(-14)" text-anchor="end" font-family="Liberation Sans, sans-serif" font-style="italic" font-size="10.6" fill="#46607f">4</text><text transform="translate(1280.9 417.1) scale(1 0.805) skewX(-14)" text-anchor="end" font-family="Liberation Sans, sans-serif" font-style="italic" font-size="10.2" fill="#46607f">5</text><text transform="translate(1289.8 374.4) scale(1 0.774) skewX(-14)" text-anchor="end" font-family="Liberation Sans, sans-serif" font-style="italic" font-size="9.8" fill="#46607f">6</text><text transform="translate(1298.2 334.5) scale(1 0.745) skewX(-14)" text-anchor="end" font-family="Liberation Sans, sans-serif" font-style="italic" font-size="9.5" fill="#46607f">7</text><text transform="translate(1306.0 297.2) scale(1 0.719) skewX(-14)" text-anchor="end" font-family="Liberation Sans, sans-serif" font-style="italic" font-size="9.2" fill="#46607f">8</text><text transform="translate(1313.3 262.3) scale(1 0.694) skewX(-14)" text-anchor="end" font-family="Liberation Sans, sans-serif" font-style="italic" font-size="8.9" fill="#46607f">9</text><text transform="translate(1320.1 229.5) scale(1 0.671) skewX(-14)" text-anchor="end" font-family="Liberation Sans, sans-serif" font-style="italic" font-size="8.6" fill="#46607f">10</text><text transform="translate(1326.6 198.6) scale(1 0.649) skewX(-14)" text-anchor="end" font-family="Liberation Sans, sans-serif" font-style="italic" font-size="8.4" fill="#46607f">11</text><text transform="translate(1332.7 169.5) scale(1 0.629) skewX(-14)" text-anchor="end" font-family="Liberation Sans, sans-serif" font-style="italic" font-size="8.1" fill="#46607f">12</text><text transform="translate(1338.4 142.0) scale(1 0.610) skewX(-14)" text-anchor="end" font-family="Liberation Sans, sans-serif" font-style="italic" font-size="7.9" fill="#46607f">13</text><text transform="translate(1343.9 116.0) scale(1 0.591) skewX(-14)" text-anchor="end" font-family="Liberation Sans, sans-serif" font-style="italic" font-size="7.7" fill="#46607f">14</text><text transform="translate(1349.0 91.4) scale(1 0.574) skewX(-14)" text-anchor="end" font-family="Liberation Sans, sans-serif" font-style="italic" font-size="7.5" fill="#46607f">15</text><text transform="translate(1353.9 68.1) scale(1 0.558) skewX(-14)" text-anchor="end" font-family="Liberation Sans, sans-serif" font-style="italic" font-size="7.3" fill="#46607f">16</text><text transform="translate(1358.6 45.9) scale(1 0.543) skewX(-14)" text-anchor="end" font-family="Liberation Sans, sans-serif" font-style="italic" font-size="7.1" fill="#46607f">17</text><text transform="translate(1363.0 24.8) scale(1 0.528) skewX(-14)" text-anchor="end" font-family="Liberation Sans, sans-serif" font-style="italic" font-size="6.9" fill="#46607f">18</text><text transform="translate(1367.2 4.7) scale(1 0.514) skewX(-14)" text-anchor="end" font-family="Liberation Sans, sans-serif" font-style="italic" font-size="6.8" fill="#46607f">19</text><defs><linearGradient id="wtop" x1="0" y1="0" x2="0" y2="1"><stop offset="0" stop-color="#bbae93"/><stop offset=".3" stop-color="#c1b89c"/><stop offset="1" stop-color="#c8c1a6"/></linearGradient><filter id="wood" x="0" y="0" width="1" height="1" color-interpolation-filters="sRGB"><feTurbulence type="fractalNoise" baseFrequency="0.004 0.045" numOctaves="3" seed="11" result="n"/><feColorMatrix in="n" type="matrix" values="0 0 0 0 0.52  0 0 0 0 0.42  0 0 0 0 0.30  0.26 0 0 0 -0.095" result="c"/><feComposite in="c" in2="SourceGraphic" operator="in" result="ci"/><feMerge><feMergeNode in="SourceGraphic"/><feMergeNode in="ci"/></feMerge></filter><linearGradient id="wfront" x1="0" y1="0" x2="1" y2="0"><stop offset="0" stop-color="#77715d"/><stop offset=".3" stop-color="#6f6a58"/><stop offset=".6" stop-color="#6c6755"/><stop offset="1" stop-color="#746e5a"/></linearGradient></defs><polygon points="1228.3,663.8 1842.6,663.8 1835.1,683.2 1235.4,683.2" fill="url(#wfront)"/><polygon points="1310.2,273.1 1760.7,273.1 1842.6,663.8 1228.3,663.8" fill="url(#wtop)" filter="url(#wood)"/></svg>
<div class="abs" style="left:0;top:0;width:776px;height:776px;overflow:hidden;transform-origin:0 0;transform:matrix3d(0.58054124,0,0,0,-0.5276031,0.27538798,0,-0.00034361464,0,0,1,0,1310.2,273.1,0,1)"><svg width="776" height="776" viewBox="97 110 776 776" style="left:0;top:0"><mask id="mt" maskUnits="userSpaceOnUse" x="97" y="110" width="900" height="776"><text transform="translate(155.0 394.9) skewX(-4)" textLength="238.5" lengthAdjust="spacingAndGlyphs" font-family="'DejaVu Serif Condensed','DejaVu Serif','Liberation Serif',serif" font-weight="bold" font-size="83.7" fill="#fff" stroke="#fff" stroke-width="7.0" stroke-linejoin="miter">Don&#39;t</text><text transform="translate(428.0 394.9) skewX(-4)" textLength="174.2" lengthAdjust="spacingAndGlyphs" font-family="'DejaVu Serif Condensed','DejaVu Serif','Liberation Serif',serif" font-weight="bold" font-size="83.7" fill="#fff" stroke="#fff" stroke-width="7.0" stroke-linejoin="miter">talk</text><text transform="translate(638.5 394.9) skewX(-4)" textLength="91.4" lengthAdjust="spacingAndGlyphs" font-family="'DejaVu Serif Condensed','DejaVu Serif','Liberation Serif',serif" font-weight="bold" font-size="83.7" fill="#fff" stroke="#fff" stroke-width="7.0" stroke-linejoin="miter">to</text><text transform="translate(759.5 394.9) skewX(-4)" textLength="141.4" lengthAdjust="spacingAndGlyphs" font-family="'DejaVu Serif Condensed','DejaVu Serif','Liberation Serif',serif" font-weight="bold" font-size="83.7" fill="#fff" stroke="#fff" stroke-width="7.0" stroke-linejoin="miter">me</text><text transform="translate(155.5 509.9) skewX(-4)" textLength="225.2" lengthAdjust="spacingAndGlyphs" font-family="'DejaVu Serif Condensed','DejaVu Serif','Liberation Serif',serif" font-weight="bold" font-size="83.7" fill="#fff" stroke="#fff" stroke-width="7.0" stroke-linejoin="miter">Until</text><text transform="translate(412.5 509.9) skewX(-4)" textLength="161.1" lengthAdjust="spacingAndGlyphs" font-family="'DejaVu Serif Condensed','DejaVu Serif','Liberation Serif',serif" font-weight="bold" font-size="83.7" fill="#fff" stroke="#fff" stroke-width="7.0" stroke-linejoin="miter">I&#39;ve</text><text transform="translate(604.0 509.9) skewX(-4)" textLength="168.2" lengthAdjust="spacingAndGlyphs" font-family="'DejaVu Serif Condensed','DejaVu Serif','Liberation Serif',serif" font-weight="bold" font-size="83.7" fill="#fff" stroke="#fff" stroke-width="7.0" stroke-linejoin="miter">had</text><text transform="translate(155.5 625.2) skewX(-4)" textLength="146.9" lengthAdjust="spacingAndGlyphs" font-family="'DejaVu Serif Condensed','DejaVu Serif','Liberation Serif',serif" font-weight="bold" font-size="83.7" fill="#fff" stroke="#fff" stroke-width="7.0" stroke-linejoin="miter">My</text></mask><g transform="translate(15.5,3.4)"><g mask="url(#mt)"><rect x="97" y="300" width="900" height="360" fill="#867f6a"/><g transform="translate(6,3)"><text transform="translate(155.0 394.9) skewX(-4)" textLength="238.5" lengthAdjust="spacingAndGlyphs" font-family="'DejaVu Serif Condensed','DejaVu Serif','Liberation Serif',serif" font-weight="bold" font-size="83.7" fill="#605a49" stroke="#605a49" stroke-width="5.6" stroke-linejoin="miter">Don&#39;t</text><text transform="translate(428.0 394.9) skewX(-4)" textLength="174.2" lengthAdjust="spacingAndGlyphs" font-family="'DejaVu Serif Condensed','DejaVu Serif','Liberation Serif',serif" font-weight="bold" font-size="83.7" fill="#605a49" stroke="#605a49" stroke-width="5.6" stroke-linejoin="miter">talk</text><text transform="translate(638.5 394.9) skewX(-4)" textLength="91.4" lengthAdjust="spacingAndGlyphs" font-family="'DejaVu Serif Condensed','DejaVu Serif','Liberation Serif',serif" font-weight="bold" font-size="83.7" fill="#605a49" stroke="#605a49" stroke-width="5.6" stroke-linejoin="miter">to</text><text transform="translate(759.5 394.9) skewX(-4)" textLength="141.4" lengthAdjust="spacingAndGlyphs" font-family="'DejaVu Serif Condensed','DejaVu Serif','Liberation Serif',serif" font-weight="bold" font-size="83.7" fill="#605a49" stroke="#605a49" stroke-width="5.6" stroke-linejoin="miter">me</text><text transform="translate(155.5 509.9) skewX(-4)" textLength="225.2" lengthAdjust="spacingAndGlyphs" font-family="'DejaVu Serif Condensed','DejaVu Serif','Liberation Serif',serif" font-weight="bold" font-size="83.7" fill="#605a49" stroke="#605a49" stroke-width="5.6" stroke-linejoin="miter">Until</text><text transform="translate(412.5 509.9) skewX(-4)" textLength="161.1" lengthAdjust="spacingAndGlyphs" font-family="'DejaVu Serif Condensed','DejaVu Serif','Liberation Serif',serif" font-weight="bold" font-size="83.7" fill="#605a49" stroke="#605a49" stroke-width="5.6" stroke-linejoin="miter">I&#39;ve</text><text transform="translate(604.0 509.9) skewX(-4)" textLength="168.2" lengthAdjust="spacingAndGlyphs" font-family="'DejaVu Serif Condensed','DejaVu Serif','Liberation Serif',serif" font-weight="bold" font-size="83.7" fill="#605a49" stroke="#605a49" stroke-width="5.6" stroke-linejoin="miter">had</text><text transform="translate(155.5 625.2) skewX(-4)" textLength="146.9" lengthAdjust="spacingAndGlyphs" font-family="'DejaVu Serif Condensed','DejaVu Serif','Liberation Serif',serif" font-weight="bold" font-size="83.7" fill="#605a49" stroke="#605a49" stroke-width="5.6" stroke-linejoin="miter">My</text></g></g></g><mask id="mb" maskUnits="userSpaceOnUse" x="330" y="500" width="250" height="230"><rect x="330" y="500" width="250" height="230" fill="#fff"/><path d="M381 540L381 562L383.3 589.3C388 615 400 638 419.2 652.1C429 659 440 661.3 449.2 661.1C460 661 475 656 488 645L494.4 638.7C506 637.5 515 636 521.3 633.6C530 630.5 537 627.5 541.8 624.6C547 621.5 551 618.5 553.3 615.6L580 600L580 540Z" fill="#000"/><ellipse cx="448.9" cy="567.6" rx="67.6" ry="35.8" fill="#000"/></mask><clipPath id="cs"><ellipse cx="448.9" cy="640" rx="109.6" ry="64.6"/></clipPath><g clip-path="url(#cs)"><g mask="url(#mb)"><ellipse cx="448.9" cy="640" rx="109.6" ry="64.6" fill="#6d6754"/><g transform="translate(4,14)"><g mask="url(#mb)"><ellipse cx="448.9" cy="634" rx="101" ry="56" fill="#aaa38b"/></g></g></g></g><ellipse cx="448.9" cy="567.6" rx="65.4" ry="33.6" fill="none" stroke="#6d6754" stroke-width="4.5"/><clipPath id="cc"><path d="M387 571.5C405 543.2 493.5 543.2 511.6 571.5L516.5 567.6A67.6 35.8 0 0 1 381.3 567.6Z"/></clipPath><g clip-path="url(#cc)"><rect x="380" y="540" width="140" height="70" fill="#6d6754"/><ellipse cx="449.3" cy="592" rx="50" ry="14" fill="#aaa38b"/></g><path d="M516.2 579.9C517.7 579.0 521.9 575.5 525.1 574.2C528.3 572.9 531.8 572.0 535.4 572.1C539.0 572.2 543.6 572.9 546.9 574.6C550.2 576.3 553.1 579.1 555.2 582.3C557.3 585.5 558.9 590.2 559.4 593.8C559.9 597.4 559.4 600.5 558.3 604.1C557.2 607.7 554.5 613.0 553.0 615.6C551.5 618.2 550.1 618.9 549.5 619.6" fill="none" stroke="#6d6754" stroke-width="4.6"/><path d="M503.1 625.6L512.9 596.4C514.9 595.2 521.1 591.3 525.1 589.4C529.1 587.5 533.3 585.6 536.7 585.1C540.1 584.6 543.2 585.1 545.6 586.4C548.0 587.6 550.4 590.3 550.8 592.6C551.2 594.9 550.1 597.4 548.2 600.3C546.3 603.2 543.3 606.8 539.2 609.9C535.1 613.0 526.4 617.3 523.8 618.8Q512 624 503.1 625.6Z M525.1 594.9C526.6 594.1 531.3 591.2 534.1 590.3C536.9 589.4 539.7 588.8 541.8 589.4C543.9 590.0 546.2 592.3 546.7 593.8C547.2 595.3 546.2 596.6 545.0 598.3C543.8 600.0 540.5 603.1 539.6 604.1Z" fill="#6d6754" fill-rule="evenodd"/></svg></div>
<div class="abs" style="left:1504px;top:49px;width:410px;height:45px;background:#fff;border:1px solid #d4d4d4;box-shadow:0 1px 2px rgba(0,0,0,.12)"></div>
<div class="abs" style="left:1515px;top:58px;width:30px;height:29.4px;background:linear-gradient(160deg,#c3b997,#c9c09f)"></div>
<span style="position:absolute;white-space:nowrap;left:1555.80px;top:57.00px;font-size:12.00px;line-height:12.00px;color:#777;letter-spacing:-0.049px;">Birch Plywood</span>
<span style="position:absolute;white-space:nowrap;left:1550.00px;top:73.00px;font-size:15.00px;line-height:15.00px;color:#777;letter-spacing:-0.069px;">8 × 8 × 0.5 in</span>
<div class="abs" style="left:1647.4px;top:50px;width:1px;height:43.6px;background:#d9d9d9"></div>
<div class="abs" style="left:1748.6px;top:50px;width:1px;height:43.6px;background:#d9d9d9"></div>
<div class="abs" style="left:1783.4px;top:50px;width:1px;height:43.6px;background:#d9d9d9"></div>
<span style="position:absolute;white-space:nowrap;left:1689.00px;top:57.00px;font-size:12.00px;line-height:12.00px;color:#777;letter-spacing:0.316px;">Bit:</span>
<span style="position:absolute;white-space:nowrap;left:1685.80px;top:73.00px;font-size:15.00px;line-height:15.00px;color:#666;letter-spacing:0.639px;">60°</span>
<svg width="14" height="14" viewBox="0 0 14 14" style="left:1759px;top:67px"><path d="M1 7H13M7 1V13" stroke="#666" stroke-width="1.2"/></svg>
<span style="position:absolute;white-space:nowrap;left:1804.00px;top:67.00px;font-size:13.40px;line-height:13.40px;color:#555;letter-spacing:0.151px;">Cut Settings</span>
<div class="abs" style="left:1884.2px;top:67.4px;width:11.4px;height:11.4px;border-radius:50%;background:#e0683f"></div>
<div class="abs" style="left:1889.1px;top:69.6px;width:1.7px;height:4.4px;background:#fff"></div><div class="abs" style="left:1889.1px;top:75.0px;width:1.7px;height:1.7px;background:#fff"></div>
<svg width="18" height="18" viewBox="0 0 18 18" style="left:1688.4px;top:909.4px"><circle cx="9.00" cy="2.80" r="1.05" fill="#555" opacity="0.12"/><circle cx="12.64" cy="3.98" r="1.05" fill="#555" opacity="0.15"/><circle cx="14.90" cy="7.08" r="1.05" fill="#555" opacity="0.18"/><circle cx="14.90" cy="10.92" r="1.05" fill="#555" opacity="0.21"/><circle cx="12.64" cy="14.02" r="1.05" fill="#555" opacity="0.45"/><circle cx="9.00" cy="15.20" r="1.05" fill="#555" opacity="0.80"/><circle cx="5.36" cy="14.02" r="1.05" fill="#555" opacity="0.80"/><circle cx="3.10" cy="10.92" r="1.05" fill="#555" opacity="0.45"/><circle cx="3.10" cy="7.08" r="1.05" fill="#555" opacity="0.36"/><circle cx="5.36" cy="3.98" r="1.05" fill="#555" opacity="0.39"/></svg>
<span style="position:absolute;white-space:nowrap;left:1710.80px;top:915.00px;font-size:13.40px;line-height:13.40px;color:#8a8a8a;letter-spacing:0.087px;">Generating...</span>
<div class="abs" style="left:1797px;top:904px;width:78px;height:32px;background:#f4f4f4"></div>
<span style="position:absolute;white-space:nowrap;left:1809.60px;top:915.00px;font-size:13.40px;line-height:13.40px;color:#3a3a3a;letter-spacing:0.158px;">Simulate</span>
<div class="abs" style="left:1880px;top:904px;width:26px;height:32px;background:#f4f4f4"></div>
<div class="abs" style="left:1892.4px;top:915.2px;width:2.6px;height:2.6px;background:#333"></div>
<div class="abs" style="left:1892.4px;top:919.8px;width:2.6px;height:2.6px;background:#333"></div>
<div class="abs" style="left:1892.4px;top:924.4px;width:2.6px;height:2.6px;background:#333"></div>
</div></div>
</body></html>
